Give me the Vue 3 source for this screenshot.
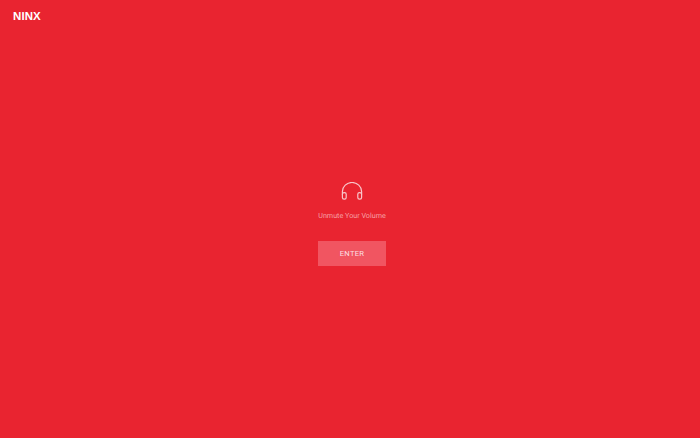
<template>
  <div class="page">
    <header class="header">
      <div class="logo">NINX</div>
    </header>
    <main class="intro">
      <svg class="headphones" width="24" height="18" viewBox="0 0 24 18" fill="none">
        <path d="M2.4 12.5V9.6a9.6 9.1 0 0 1 19.2 0v2.9" />
        <rect x="2.4" y="10.6" width="3.8" height="6.6" rx="1.7" />
        <rect x="17.8" y="10.6" width="3.8" height="6.6" rx="1.7" />
      </svg>
      <p class="message">Unmute Your Volume</p>
      <button type="button" class="enter-btn">ENTER</button>
    </main>
  </div>
</template>

<script setup>
</script>

<style>
body {
  margin: 0;
}
</style>

<style scoped>
.page {
  display: flex;
  flex-direction: column;
  width: 700px;
  height: 438px;
  overflow: hidden;
  background: #e92430;
  font-family: Roboto, "Liberation Sans", Arial, sans-serif;
  text-rendering: geometricPrecision;
}

.header {
  height: 0;
  padding: 9.5px 13px 8.5px;
}

.logo {
  color: #fff;
  font-family: "Liberation Sans", Arial, sans-serif;
  font-size: 11.5px;
  font-weight: 700;
  line-height: 14px;
  letter-spacing: 0.1px;
}

.intro {
  display: flex;
  flex-direction: column;
  align-items: center;
  width: 68px;
  margin-left: 318px;
  padding-top: 164px;
}

.headphones {
  stroke: #f8c6ca;
  stroke-width: 1.2;
}

.message {
  margin: 11px 0 0;
  color: #f7a0a6;
  font-size: 7.2px;
  line-height: 10px;
  white-space: nowrap;
}

.enter-btn {
  width: 68px;
  height: 25px;
  margin-top: 20px;
  padding: 0;
  border: none;
  background: #f15561;
  color: #fcdfe1;
  font-family: inherit;
  font-size: 7.6px;
  letter-spacing: 0.3px;
  cursor: pointer;
}
</style>
